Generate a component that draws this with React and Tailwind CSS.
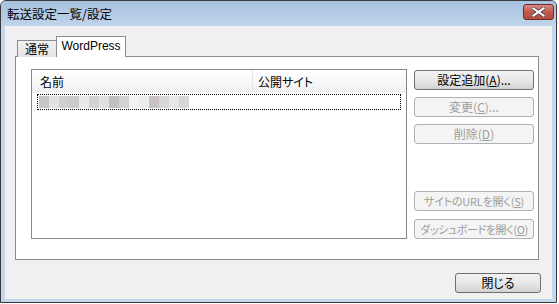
import React from 'react';

const jp = { fontFamily: '"Noto Sans CJK JP", "Liberation Sans", sans-serif' };

const blurBlocks = [
    '#c6c6c6', '#e2e2e2', '#cfcfcf', '#cbcbcb', '#e9e9e9', '#d3d3d3', '#e0e0e0', '#bfbfbf',
    '#d2d2d2', '#f2f2f2', '#ececec', '#c9c2c2', '#d8d8d8', '#e7e7e7', '#d6d6d6',
];

function WinButton({ children, disabled, className = '' }) {
    return (
        <div
            className={`h-[20px] flex items-center justify-center rounded-[3px] border leading-none whitespace-nowrap [font-feature-settings:'palt'] ${
                disabled
                    ? 'border-[#adb2b5] bg-[#f4f4f4] text-[#9d9d9d]'
                    : 'border-[#707070] bg-gradient-to-b from-[#f2f2f2] via-[#e8e8e8] to-[#d3d3d3] text-black'
            } ${className}`}
        >
            {children}
        </div>
    );
}

export default function App() {
    return (
        <div className="w-[559px] h-[304px] bg-white overflow-hidden" style={jp}>
            <div className="w-[557px] h-[303px] flex flex-col border border-[#3a3a3a] rounded-t-[6px] bg-[#c3d7ed] overflow-hidden">
                {/* title bar */}
                <div className="h-[25px] shrink-0 flex items-center justify-between bg-gradient-to-b from-[#a7c1e0] to-[#bfd4eb] pl-[6px] pr-[2px]">
                    <span className="text-[12.5px] leading-none text-black pt-[1px]">転送設定一覧/設定</span>
                    <div className="w-[31px] h-[16px] -mt-[3px] rounded-[3px] border border-[#6b2e2a] bg-gradient-to-b from-[#d88a80] via-[#c45a4c] to-[#b84a3e] flex items-center justify-center">
                        <svg width="13" height="10" viewBox="0 0 13 10">
                            <path d="M1.5 1.5 L11.5 8.5 M11.5 1.5 L1.5 8.5" stroke="#4a4a4a" strokeWidth="3.6" strokeLinecap="square" />
                            <path d="M1.5 1.5 L11.5 8.5 M11.5 1.5 L1.5 8.5" stroke="#ffffff" strokeWidth="2" strokeLinecap="square" />
                        </svg>
                    </div>
                </div>

                {/* client area */}
                <div className="flex-1 mx-[4px] mb-[3px] bg-[#f0f0f0] flex flex-col pl-[10px] pr-[13px] pt-[10px]">
                    {/* tabs */}
                    <div className="flex items-end h-[21px] pl-[2px] relative z-10 -mb-px">
                        <div className="h-[17px] w-[40px] border border-b-0 border-[#898c95] bg-gradient-to-b from-[#f2f2f2] to-[#e3e3e3] text-[12px] leading-none flex items-center justify-center">
                            通常
                        </div>
                        <div
                            className="h-[21px] w-[70px] -ml-px border border-b-0 border-[#898c95] bg-white text-[12px] leading-none flex items-center justify-center pb-[2px]"
                            style={{ fontFamily: '"Liberation Sans", sans-serif' }}
                        >
                            WordPress
                        </div>
                    </div>

                    {/* tab panel */}
                    <div className="h-[204px] border border-[#898c95] bg-white flex pl-[15px] pt-[12px] pb-[20px]">
                        {/* list */}
                        <div className="w-[376px] border border-[#828790] flex flex-col">
                            <div className="h-[23px] flex bg-gradient-to-b from-white to-[#f0f1f3] text-[12px] leading-none text-black [font-feature-settings:'palt']">
                                <div className="w-[221px] border-r border-[#e3e5e8] flex items-center pl-[8px]">名前</div>
                                <div className="flex items-center pl-[5px]">公開サイト</div>
                            </div>
                            <div className="mt-[1px] mx-[5px] h-[16px] border border-dotted border-black flex items-center pl-px">
                                {blurBlocks.map((c, i) => (
                                    <div key={i} className="w-[10px] h-[12px]" style={{ backgroundColor: c }} />
                                ))}
                            </div>
                        </div>

                        {/* buttons */}
                        <div className="w-[120px] ml-[7px] flex flex-col justify-between pt-[1px]">
                            <div className="flex flex-col gap-[7px]">
                                <WinButton className="text-[12px]">設定追加(<span className="underline">A</span>)...</WinButton>
                                <WinButton disabled className="text-[12px]">変更(<span className="underline">C</span>)...</WinButton>
                                <WinButton disabled className="text-[12px]">削除(<span className="underline">D</span>)</WinButton>
                            </div>
                            <div className="flex flex-col gap-[8px]">
                                <WinButton disabled className="text-[11px] tracking-[-0.2px]">
                                    サイトのURLを開く(<span className="underline">S</span>)
                                </WinButton>
                                <WinButton disabled className="text-[11px] tracking-[-0.4px]">
                                    ダッシュボードを開く(<span className="underline">O</span>)
                                </WinButton>
                            </div>
                        </div>
                    </div>

                    {/* footer */}
                    <div className="flex justify-end mt-[13px] -mr-[2px]">
                        <WinButton className="w-[86px] text-[12px]">閉じる</WinButton>
                    </div>
                </div>
            </div>
        </div>
    );
}
